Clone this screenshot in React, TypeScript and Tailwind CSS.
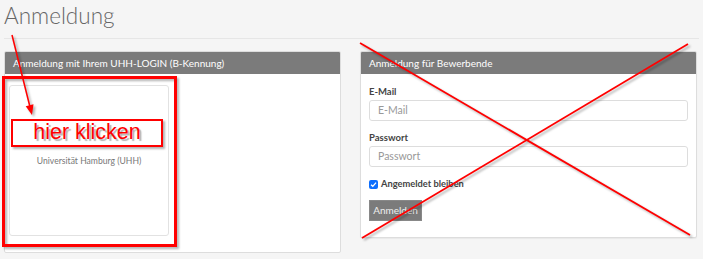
export default function App() {
  return (
    <div className="relative h-[259px] w-[703px] overflow-hidden bg-[#f5f5f5] px-[4px] font-['Lato',sans-serif] text-[#333]">
      {/* Title */}
      <h1 className="h-[32px] pt-[1px] text-[22.5px] font-light leading-[30px] text-[#666]">Anmeldung</h1>
      <div className="mt-[6px] border-t border-[#e6e6e6]" />

      <div className="mt-[12px] flex gap-[19px]">
        {/* UHH login */}
        <div className="w-[337px] overflow-hidden rounded-[2px] border border-[#ddd] bg-white">
          <div className="h-[22px] bg-[#7b7b7b] pl-[8px] text-[10px] leading-[22px] text-white">
            Anmeldung mit Ihrem UHH-LOGIN (B-Kennung)
          </div>
          <div className="px-[4px] pb-[16px] pt-[11px]">
            <div className="flex h-[151px] w-[160px] flex-col items-center rounded-[3px] border border-[#e2e2e2] bg-white">
              <div className="h-[69px]" />
              <div className="text-[8.6px] leading-[12px] text-[#777]">Universität Hamburg (UHH)</div>
            </div>
          </div>
        </div>

        {/* applicants */}
        <div className="h-[187px] w-[337px] overflow-hidden rounded-[2px] border border-[#ddd] bg-white shadow-[0_1px_1px_rgba(0,0,0,0.05)]">
          <div className="h-[22px] bg-[#7b7b7b] pl-[8px] text-[10px] leading-[22px] text-white">
            Anmeldung für Bewerbende
          </div>
          <div className="px-[8px] pt-[11px]">
            <label className="block h-[14px] text-[9.5px] font-bold leading-[14px] text-[#444]">E-Mail</label>
            <div className="mt-[1px] flex h-[21px] items-center rounded-[3px] border border-[#ddd] px-[8px] text-[10.5px] text-[#999]">
              E-Mail
            </div>
            <label className="mt-[10px] block h-[14px] text-[9.5px] font-bold leading-[14px] text-[#444]">Passwort</label>
            <div className="mt-[1px] flex h-[21px] items-center rounded-[3px] border border-[#ddd] px-[8px] text-[10.5px] text-[#999]">
              Passwort
            </div>
            <div className="mt-[10px] flex h-[14px] items-center gap-[3px]">
              <span className="flex h-[9px] w-[9px] items-center justify-center rounded-[2px] bg-[#0d6efd]">
                <svg width="7" height="7" viewBox="0 0 8 8">
                  <path d="M1.2 4.2 L3.2 6.1 L6.9 1.8" fill="none" stroke="white" strokeWidth="1.5" />
                </svg>
              </span>
              <span className="text-[9.3px] font-bold text-[#444]">Angemeldet bleiben</span>
            </div>
            <button className="mt-[9px] h-[21px] w-[53px] border border-[#888] bg-[#7b7b7b] text-[10px] text-[#eee]">
              Anmelden
            </button>
          </div>
        </div>
      </div>

      {/* "hier klicken" annotation */}
      <div className="absolute left-[11px] top-[119px] flex h-[28px] w-[152px] items-center justify-center border-[2.5px] border-[#ff0000] shadow-[2px_2px_2px_rgba(0,0,0,0.3)]">
        <span className="font-['Liberation_Sans',sans-serif] text-[21.5px] leading-none text-[#ff0000] [text-shadow:2px_2px_1px_rgba(0,0,0,0.3)]">
          hier klicken
        </span>
      </div>

      {/* red marks */}
      <svg
        className="pointer-events-none absolute left-0 top-0 drop-shadow-[2px_2px_1px_rgba(0,0,0,0.3)]"
        width="703"
        height="259"
      >
        <rect x="3.5" y="77.5" width="172" height="168" fill="none" stroke="#ff0000" strokeWidth="3" />
        <line x1="12" y1="35" x2="30" y2="107" stroke="#ff0000" strokeWidth="1.5" />
        <polygon points="32,115 33.5,104.3 25.7,106.3" fill="#ff0000" />
        <line x1="360" y1="43" x2="690" y2="235" stroke="#ff0000" strokeWidth="1.8" />
        <line x1="688" y1="44" x2="362" y2="238" stroke="#ff0000" strokeWidth="1.8" />
      </svg>
    </div>
  )
}
